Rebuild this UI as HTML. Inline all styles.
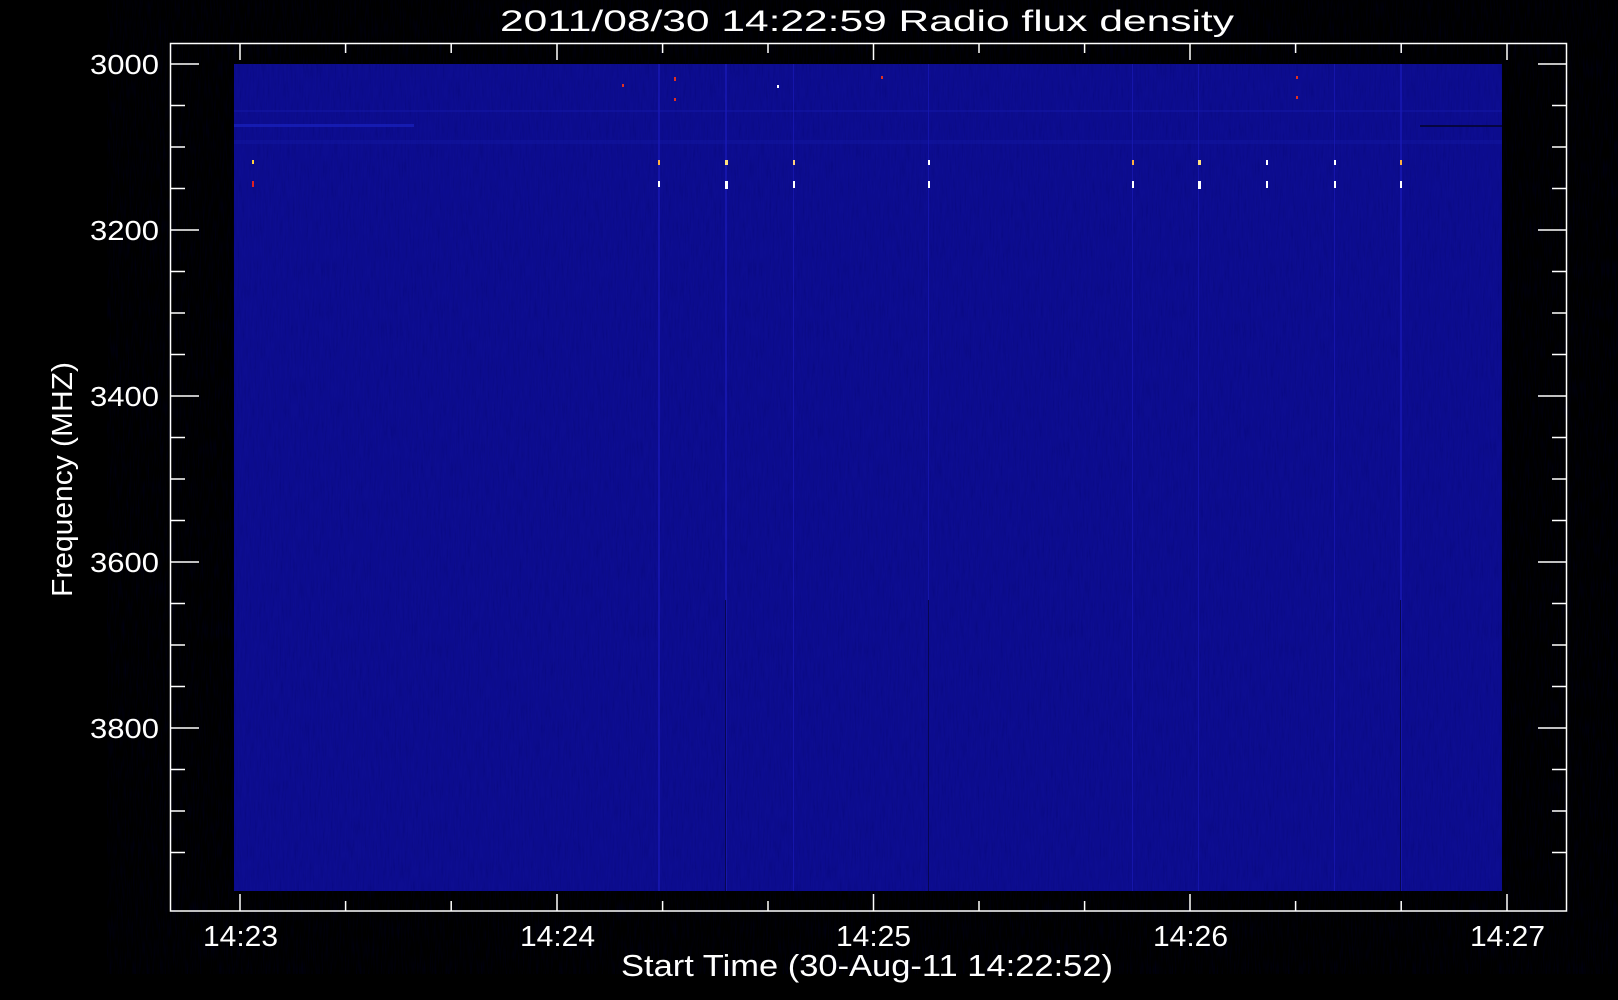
<!DOCTYPE html>
<html><head><meta charset="utf-8"><style>html,body{margin:0;padding:0;background:#000;width:1618px;height:1000px;overflow:hidden}</style></head><body>
<svg width="1618" height="1000" xmlns="http://www.w3.org/2000/svg" font-family="Liberation Sans, sans-serif" fill="#fff">
<rect width="1618" height="1000" fill="#000"/>
<rect x="234" y="64" width="1268" height="827" fill="#0d0d90"/>
<rect x="234" y="64" width="1268" height="827" fill="#0a0a70" opacity="0.35" filter="url(#n)"/>
<defs><filter id="n"><feTurbulence type="fractalNoise" baseFrequency="0.6 0.05" numOctaves="2"/><feColorMatrix values="0 0 0 0 0  0 0 0 0 0  0 0 0 0 0.1  0 0 0 1.2 -0.5"/></filter></defs>
<rect x="234" y="124" width="180" height="3" fill="#1a22c0" opacity="0.7"/>
<rect x="234" y="110" width="1268" height="2" fill="#1418a8" opacity="0.5"/>
<rect x="234" y="140" width="1268" height="4" fill="#1216a0" opacity="0.5"/>
<rect x="1420" y="125" width="82" height="2" fill="#050540"/>
<g fill="#1a1ab8" opacity="0.7">
<rect x="658" y="64" width="2" height="827"/><rect x="725" y="64" width="2" height="827"/><rect x="793" y="64" width="1" height="827"/><rect x="928" y="64" width="1" height="827"/><rect x="1132" y="64" width="1" height="827"/><rect x="1198" y="64" width="1" height="827"/><rect x="1334" y="64" width="1" height="827"/><rect x="1400" y="64" width="2" height="827"/>
</g>
<g fill="#04043a" opacity="0.8"><rect x="725" y="600" width="1" height="291"/><rect x="1400" y="600" width="1" height="291"/><rect x="928" y="600" width="1" height="291"/></g>
<g>
<rect x="252" y="160" width="2" height="4" fill="#ffd040"/><rect x="252" y="181" width="2" height="6" fill="#e02020"/>
<rect x="658" y="160" width="2" height="5" fill="#ffb040"/><rect x="658" y="181" width="2" height="6" fill="#fff"/>
<rect x="725" y="160" width="3" height="5" fill="#ffe080"/><rect x="725" y="181" width="3" height="8" fill="#fff"/>
<rect x="793" y="160" width="2" height="5" fill="#ffd080"/><rect x="793" y="181" width="2" height="7" fill="#fff"/>
<rect x="928" y="160" width="2" height="5" fill="#fff"/><rect x="928" y="181" width="2" height="7" fill="#fff"/>
<rect x="1132" y="160" width="2" height="5" fill="#ffb040"/><rect x="1132" y="181" width="2" height="7" fill="#fff"/>
<rect x="1198" y="160" width="3" height="5" fill="#ffe080"/><rect x="1198" y="181" width="3" height="8" fill="#fff"/>
<rect x="1266" y="160" width="2" height="5" fill="#fff"/><rect x="1266" y="181" width="2" height="7" fill="#fff"/>
<rect x="1334" y="160" width="2" height="5" fill="#fff"/><rect x="1334" y="181" width="2" height="7" fill="#fff"/>
<rect x="1400" y="160" width="2" height="5" fill="#ffb040"/><rect x="1400" y="181" width="2" height="7" fill="#fff"/>
<rect x="622" y="84" width="2" height="3" fill="#e03020"/><rect x="674" y="77" width="2" height="4" fill="#e03020"/><rect x="674" y="98" width="2" height="3" fill="#e03020"/><rect x="777" y="85" width="2" height="3" fill="#fff"/><rect x="1296" y="76" width="2" height="3" fill="#e03020"/><rect x="1296" y="96" width="2" height="3" fill="#e03020"/><rect x="881" y="76" width="2" height="3" fill="#e03020"/>
</g>
<g stroke="#fff" stroke-width="1.5" fill="none">
<rect x="170.5" y="43.5" width="1396" height="867.5"/>
<path d="M240 43v17M557 43v17M873.5 43v17M1190 43v17M1507 43v17M240 911v-17M557 911v-17M873.5 911v-17M1190 911v-17M1507 911v-17"/>
<path d="M345.6 43v10M451.2 43v10M662.6 43v10M768 43v10M979 43v10M1084.6 43v10M1295.6 43v10M1401.2 43v10M345.6 911v-10M451.2 911v-10M662.6 911v-10M768 911v-10M979 911v-10M1084.6 911v-10M1295.6 911v-10M1401.2 911v-10"/>
<path d="M170 64h29M170 230h29M170 396h29M170 562h29M170 728h29M1567 64h-29M1567 230h-29M1567 396h-29M1567 562h-29M1567 728h-29"/>
<path d="M170 105.5h15M170 147h15M170 188.5h15M170 271.5h15M170 313h15M170 354.5h15M170 437.5h15M170 479h15M170 520.5h15M170 603.5h15M170 645h15M170 686.5h15M170 769.5h15M170 811h15M170 852.5h15M1567 105.5h-15M1567 147h-15M1567 188.5h-15M1567 271.5h-15M1567 313h-15M1567 354.5h-15M1567 437.5h-15M1567 479h-15M1567 520.5h-15M1567 603.5h-15M1567 645h-15M1567 686.5h-15M1567 769.5h-15M1567 811h-15M1567 852.5h-15"/>
</g>
<g font-size="28" text-anchor="end">
<text x="159" y="74" textLength="69" lengthAdjust="spacingAndGlyphs">3000</text>
<text x="159" y="240" textLength="69" lengthAdjust="spacingAndGlyphs">3200</text>
<text x="159" y="406" textLength="69" lengthAdjust="spacingAndGlyphs">3400</text>
<text x="159" y="572" textLength="69" lengthAdjust="spacingAndGlyphs">3600</text>
<text x="159" y="738" textLength="69" lengthAdjust="spacingAndGlyphs">3800</text>
</g>
<g font-size="29">
<text x="203" y="946" textLength="75" lengthAdjust="spacingAndGlyphs">14:23</text>
<text x="520" y="946" textLength="75" lengthAdjust="spacingAndGlyphs">14:24</text>
<text x="836" y="946" textLength="75" lengthAdjust="spacingAndGlyphs">14:25</text>
<text x="1153" y="946" textLength="75" lengthAdjust="spacingAndGlyphs">14:26</text>
<text x="1470" y="946" textLength="75" lengthAdjust="spacingAndGlyphs">14:27</text>
</g>
<text x="621" y="976" font-size="31" textLength="492" lengthAdjust="spacingAndGlyphs">Start Time (30-Aug-11 14:22:52)</text>
<text x="500" y="31" font-size="30" textLength="734" lengthAdjust="spacingAndGlyphs">2011/08/30 14:22:59 Radio flux density</text>
<text transform="translate(72,597) rotate(-90)" font-size="29" textLength="235" lengthAdjust="spacingAndGlyphs">Frequency (MHZ)</text>
</svg>
</body></html>
